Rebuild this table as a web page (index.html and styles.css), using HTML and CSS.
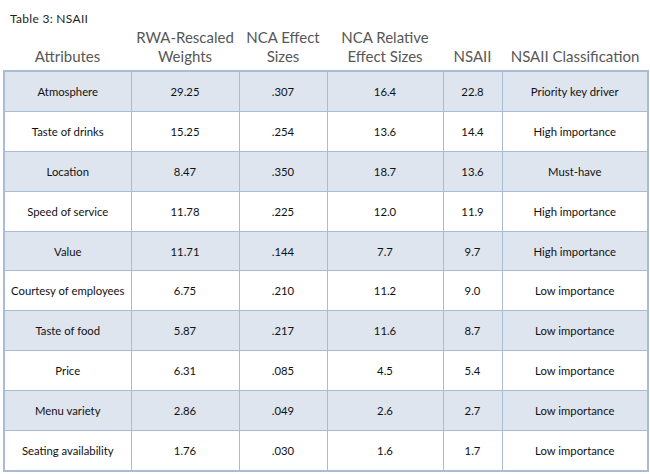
FILE: index.html
```html
<!DOCTYPE html>
<html>
<head>
<meta charset="utf-8">
<link rel="stylesheet" href="styles.css">
</head>
<body>
<div class="page">
  <div class="title">Table 3: NSAII</div>
  <table class="nsaii">
    <colgroup>
      <col class="c1"><col class="c2"><col class="c3"><col class="c4"><col class="c5"><col class="c6">
    </colgroup>
    <thead>
      <tr>
        <th>Attributes</th>
        <th>RWA-Rescaled<br>Weights</th>
        <th>NCA Effect<br>Sizes</th>
        <th>NCA Relative<br>Effect Sizes</th>
        <th>NSAII</th>
        <th>NSAII Classification</th>
      </tr>
    </thead>
    <tbody>
      <tr class="shade"><td>Atmosphere</td><td>29.25</td><td>.307</td><td>16.4</td><td>22.8</td><td>Priority key driver</td></tr>
      <tr><td>Taste of drinks</td><td>15.25</td><td>.254</td><td>13.6</td><td>14.4</td><td>High importance</td></tr>
      <tr class="shade"><td>Location</td><td>8.47</td><td>.350</td><td>18.7</td><td>13.6</td><td>Must-have</td></tr>
      <tr><td>Speed of service</td><td>11.78</td><td>.225</td><td>12.0</td><td>11.9</td><td>High importance</td></tr>
      <tr class="shade"><td>Value</td><td>11.71</td><td>.144</td><td>7.7</td><td>9.7</td><td>High importance</td></tr>
      <tr><td>Courtesy of employees</td><td>6.75</td><td>.210</td><td>11.2</td><td>9.0</td><td>Low importance</td></tr>
      <tr class="shade"><td>Taste of food</td><td>5.87</td><td>.217</td><td>11.6</td><td>8.7</td><td>Low importance</td></tr>
      <tr><td>Price</td><td>6.31</td><td>.085</td><td>4.5</td><td>5.4</td><td>Low importance</td></tr>
      <tr class="shade"><td>Menu variety</td><td>2.86</td><td>.049</td><td>2.6</td><td>2.7</td><td>Low importance</td></tr>
      <tr><td>Seating availability</td><td>1.76</td><td>.030</td><td>1.6</td><td>1.7</td><td>Low importance</td></tr>
    </tbody>
  </table>
</div>
</body>
</html>
```
FILE: styles.css
```css
html, body {
  margin: 0;
  padding: 0;
  background: #ffffff;
}

.page {
  padding: 12px 3px 0 3px;
  font-family: Lato, "Open Sans", sans-serif;
}

.title {
  font-size: 12px;
  line-height: 13px;
  letter-spacing: 0.3px;
  color: #1e1e1e;
  margin-left: 7px;
}

.nsaii {
  width: 644px;
  table-layout: fixed;
  border-collapse: collapse;
  margin-top: 3px;
}

.c1 { width: 127px; }
.c2 { width: 108px; }
.c3 { width: 88px; }
.c4 { width: 116px; }
.c5 { width: 59px; }
.c6 { width: 146px; }

.nsaii th {
  font-weight: normal;
  font-size: 15px;
  line-height: 19px;
  color: #575757;
  vertical-align: bottom;
  text-align: center;
  padding: 0 0 4px 0;
}

.nsaii tbody {
  border: 2px solid #a9bcd4;
}

.nsaii td {
  border: 1px solid #a9bcd4;
  height: 38.9px;
  padding: 0;
  text-align: center;
  vertical-align: middle;
  font-size: 11.3px;
  color: #111;
}

.nsaii tr.shade td {
  background: #dfe5ef;
}
```
